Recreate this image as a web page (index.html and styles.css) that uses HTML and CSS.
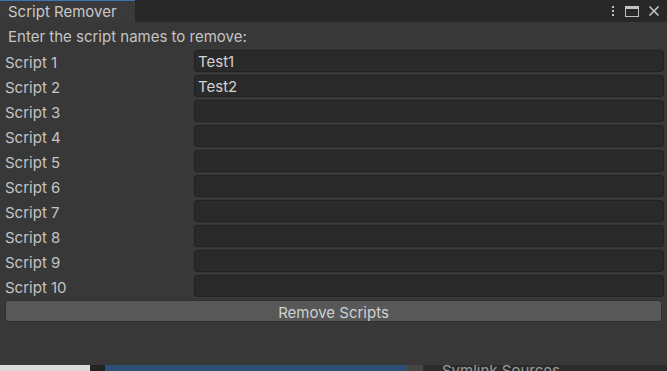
FILE: index.html
```html
<!DOCTYPE html>
<html lang="en">
<head>
    <meta charset="UTF-8">
    <title>Script Remover</title>
    <link rel="stylesheet" href="styles.css">
</head>
<body>
    <div class="window">
        <div class="tab-bar">
            <div class="tab">Script Remover</div>
            <div class="tab-icons">
                <svg class="icon" width="6" height="14" viewBox="0 0 6 14">
                    <rect x="2" y="2" width="2" height="2" fill="#c4c4c4"/>
                    <rect x="2" y="6" width="2" height="2" fill="#c4c4c4"/>
                    <rect x="2" y="10" width="2" height="2" fill="#c4c4c4"/>
                </svg>
                <svg class="icon" width="16" height="14" viewBox="0 0 16 14">
                    <rect x="1.5" y="2.5" width="13" height="10" fill="none" stroke="#c4c4c4"/>
                    <rect x="1" y="2" width="14" height="3" fill="#c4c4c4"/>
                </svg>
                <svg class="icon" width="12" height="14" viewBox="0 0 12 14">
                    <path d="M1.5 2.5 L10.5 11.5 M10.5 2.5 L1.5 11.5" stroke="#c4c4c4" stroke-width="1.6"/>
                </svg>
            </div>
        </div>

        <div class="content">
            <div class="intro">Enter the script names to remove:</div>
            <div class="row"><span class="label">Script 1</span><div class="field">Test1</div></div>
            <div class="row"><span class="label">Script 2</span><div class="field">Test2</div></div>
            <div class="row"><span class="label">Script 3</span><div class="field"></div></div>
            <div class="row"><span class="label">Script 4</span><div class="field"></div></div>
            <div class="row"><span class="label">Script 5</span><div class="field"></div></div>
            <div class="row"><span class="label">Script 6</span><div class="field"></div></div>
            <div class="row"><span class="label">Script 7</span><div class="field"></div></div>
            <div class="row"><span class="label">Script 8</span><div class="field"></div></div>
            <div class="row"><span class="label">Script 9</span><div class="field"></div></div>
            <div class="row"><span class="label">Script 10</span><div class="field"></div></div>
            <button class="remove-button">Remove Scripts</button>
        </div>

        <div class="bottom-strip">
            <div class="strip-white"></div>
            <div class="strip-dark"></div>
            <div class="strip-blue"></div>
            <div class="strip-gray"></div>
            <div class="strip-text">Symlink Sources</div>
        </div>
    </div>
</body>
</html>
```

FILE: styles.css
```css
body {
    margin: 0;
    padding: 0;
    background: #383838;
    font-family: Inter, "Noto Sans", sans-serif;
    font-size: 15px;
    color: #c4c4c4;
}
.window {
    display: flex;
    flex-direction: column;
    height: 371px;
    overflow: hidden;
}
.tab-bar {
    display: flex;
    align-items: stretch;
    height: 22px;
    background: #282828;
    flex-shrink: 0;
}
.tab {
    width: 127px;
    padding: 1px 0 0 8px;
    line-height: 20px;
    background: #3a3a3a;
    border-top: 1px solid #3d74b4;
    color: #c8c8c8;
}
.tab-icons {
    margin-left: auto;
    display: flex;
    align-items: center;
    gap: 8px;
    padding-right: 7px;
}
.icon {
    display: block;
}
.content {
    flex: 1;
    padding: 4px 3px 0 5px;
}
.intro {
    height: 22px;
    line-height: 22px;
    padding-left: 3px;
    margin-bottom: 2px;
}
.row {
    display: flex;
    align-items: center;
    height: 22px;
    margin-bottom: 3px;
}
.label {
    width: 189px;
    flex-shrink: 0;
    padding-top: 2px;
}
.field {
    flex: 1;
    height: 19px;
    line-height: 19px;
    padding: 1px 0 0 3px;
    background: #2a2a2a;
    border: 1px solid #212121;
    border-radius: 3px;
    color: #d2d2d2;
}
.remove-button {
    display: block;
    width: calc(100% - 2px);
    height: 22px;
    margin-top: 1px;
    padding: 2px 0 0;
    background: #585858;
    border: 1px solid #303030;
    border-radius: 3px;
    font-family: inherit;
    font-size: 15px;
    color: #d0d0d0;
}
.bottom-strip {
    display: flex;
    height: 6px;
    flex-shrink: 0;
    background: #2b2b2b;
    overflow: hidden;
}
.strip-white {
    width: 90px;
    background: #dcdcdc;
}
.strip-dark {
    width: 15px;
    background: #232323;
}
.strip-blue {
    width: 301px;
    background: #2c5071;
}
.strip-gray {
    width: 17px;
    background: #454545;
}
.strip-text {
    padding-left: 19px;
    line-height: 12px;
    color: #9a9a9a;
}
```
